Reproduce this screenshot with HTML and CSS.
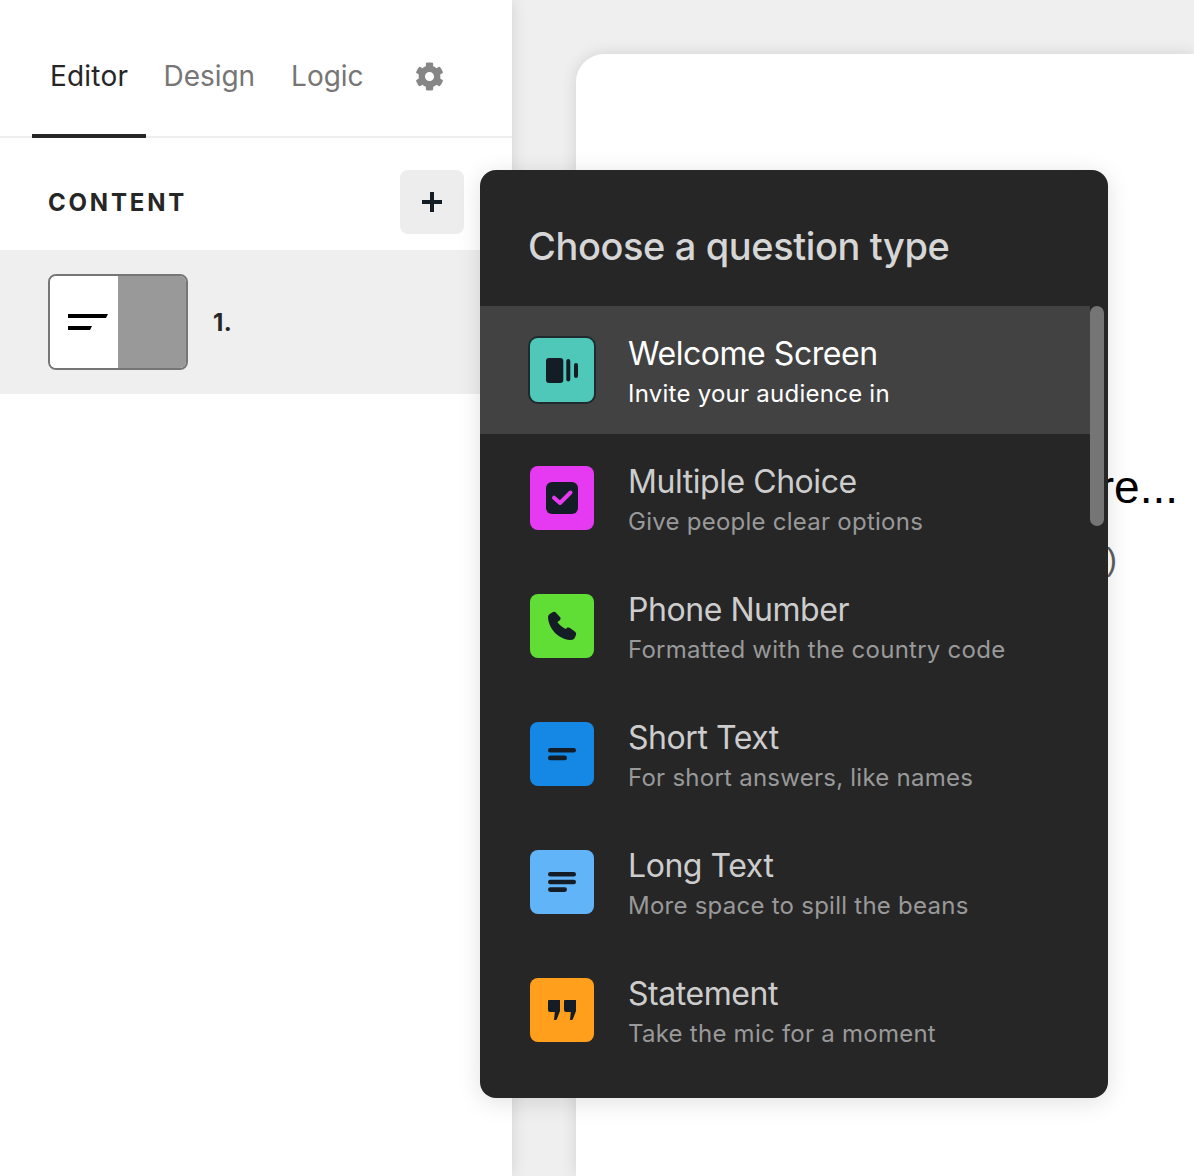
FILE: index.html
```html
<!DOCTYPE html>
<html lang="en">
<head>
<meta charset="utf-8">
<title>Choose a question type</title>
<link rel="stylesheet" href="styles.css">
</head>
<body>
<div class="app">
  <aside class="sidebar">
    <nav class="tabs">
      <a class="tab tab-active">Editor</a>
      <a class="tab tab-shift">Design</a>
      <a class="tab">Logic</a>
      <svg class="gear" viewBox="0 0 512 512"><path d="M487.4 315.7l-42.6-24.6c4.3-23.2 4.3-47 0-70.2l42.6-24.6c4.9-2.8 7.1-8.6 5.5-14-11.1-35.6-30-67.8-54.7-94.6-3.8-4.1-10-5.1-14.8-2.3L380.8 110c-17.9-15.4-38.5-27.3-60.8-35.1V25.8c0-5.6-3.9-10.5-9.4-11.7-36.7-8.2-74.3-7.8-109.2 0-5.5 1.2-9.4 6.1-9.4 11.7V75c-22.2 7.9-42.8 19.8-60.8 35.1L88.7 85.5c-4.9-2.8-11-1.9-14.8 2.3-24.7 26.7-43.6 58.9-54.7 94.6-1.7 5.4.6 11.2 5.5 14L67.3 221c-4.3 23.2-4.3 47 0 70.2l-42.6 24.6c-4.9 2.8-7.1 8.6-5.5 14 11.1 35.6 30 67.8 54.7 94.6 3.8 4.1 10 5.1 14.8 2.3l42.6-24.6c17.9 15.4 38.5 27.3 60.8 35.1v49.2c0 5.6 3.9 10.5 9.4 11.7 36.7 8.2 74.3 7.8 109.2 0 5.5-1.2 9.4-6.1 9.4-11.7v-49.2c22.2-7.9 42.8-19.8 60.8-35.1l42.6 24.6c4.9 2.8 11 1.9 14.8-2.3 24.7-26.7 43.6-58.9 54.7-94.6 1.5-5.5-.7-11.3-5.6-14.1zM256 336c-44.1 0-80-35.9-80-80s35.9-80 80-80 80 35.9 80 80-35.9 80-80 80z"/></svg>
    </nav>
    <div class="content-head">
      <h2 class="content-title">CONTENT</h2>
      <button class="add-btn" type="button" aria-label="Add">
        <svg class="plus" viewBox="0 0 20 20"><path d="M0 10H20M10 0V20"/></svg>
      </button>
    </div>
    <div class="question-row">
      <div class="thumb">
        <div class="thumb-left">
          <svg class="thumb-icon" viewBox="0 0 40 16"><path d="M0 0H40L38 4H0ZM0 12H24L22 16H0Z"/></svg>
        </div>
        <div class="thumb-right"></div>
      </div>
      <span class="question-num">1.</span>
    </div>
  </aside>

  <main class="canvas">
    <section class="card">
      <p class="card-title">Sure...</p>
      <p class="card-sub">(optional)</p>
    </section>
  </main>

  <div class="popup">
    <h3 class="popup-title">Choose a question type</h3>
    <ul class="type-list">
      <li class="type type-active">
        <span class="tile tile-welcome">
          <svg class="tile-icon" viewBox="0 0 64 64"><rect x="16" y="20" width="17.3" height="25" rx="3"/><rect x="36.3" y="21" width="4" height="22.5" rx="2"/><rect x="44" y="25" width="4" height="15" rx="2"/></svg>
        </span>
        <span class="type-text"><span class="type-name">Welcome Screen</span><span class="type-desc">Invite your audience in</span></span>
      </li>
      <li class="type">
        <span class="tile tile-choice">
          <svg class="tile-icon" viewBox="0 0 64 64"><rect x="16" y="16" width="32" height="32" rx="6"/><path class="check" d="M24 31.7L30 37L40.5 26.5"/></svg>
        </span>
        <span class="type-text"><span class="type-name">Multiple Choice</span><span class="type-desc">Give people clear options</span></span>
      </li>
      <li class="type">
        <span class="tile tile-phone">
          <svg class="tile-icon" viewBox="0 0 64 64"><path d="M18 23Q18 20.5 20.5 19.5L23 18Q25 17.4 26.2 19L30.4 23.6Q31.3 25.3 29.6 26.4L27.4 28Q30 32.2 35.8 35L37.4 33.6Q38.8 33 40 34L45.4 38Q46.6 39.4 46 41L44.4 44.4Q43 46 40 46C28 45 18.5 34.5 18 23Z"/></svg>
        </span>
        <span class="type-text"><span class="type-name">Phone Number</span><span class="type-desc">Formatted with the country code</span></span>
      </li>
      <li class="type">
        <span class="tile tile-short">
          <svg class="tile-icon" viewBox="0 0 64 64"><rect x="18" y="26" width="28" height="4.6" rx="2.3"/><rect x="18" y="33.6" width="19" height="4.6" rx="2.3"/></svg>
        </span>
        <span class="type-text"><span class="type-name">Short Text</span><span class="type-desc">For short answers, like names</span></span>
      </li>
      <li class="type">
        <span class="tile tile-long">
          <svg class="tile-icon" viewBox="0 0 64 64"><rect x="18" y="22" width="28" height="4.6" rx="2.3"/><rect x="18" y="29.7" width="28" height="4.6" rx="2.3"/><rect x="18" y="37.3" width="19" height="4.6" rx="2.3"/></svg>
        </span>
        <span class="type-text"><span class="type-name">Long Text</span><span class="type-desc">More space to spill the beans</span></span>
      </li>
      <li class="type">
        <span class="tile tile-statement">
          <svg class="tile-icon" viewBox="0 0 64 64"><path d="M19 22H30V33L26.7 41.5Q25.5 42.3 24 42L24.8 34H20Q18 34 18 32V23Q18 22 19 22ZM35 22H46V33L42.7 41.5Q41.5 42.3 40 42L40.8 34H36Q34 34 34 32V23Q34 22 35 22Z"/></svg>
        </span>
        <span class="type-text"><span class="type-name">Statement</span><span class="type-desc">Take the mic for a moment</span></span>
      </li>
    </ul>
    <div class="scroll-thumb"></div>
  </div>
</div>
</body>
</html>
```

FILE: styles.css
```css
* { box-sizing: border-box; }
html, body { margin: 0; height: 100%; overflow: hidden; }
body { font-family: Inter, "Noto Sans", sans-serif; background: #efefef; color: #262627; }

.app { position: relative; display: flex; width: 1194px; height: 1176px; overflow: hidden; }

/* sidebar */
.sidebar { position: relative; z-index: 1; flex: 0 0 512px; background: #fff; box-shadow: 0 0 16px rgba(0,0,0,.12); }
.tabs { display: flex; align-items: center; height: 138px; padding-left: 32px; border-bottom: 2px solid #eee; }
.tab { display: flex; align-items: center; height: 138px; margin-bottom: -2px; padding: 18px 18px 0; font-size: 28px; line-height: 36px; letter-spacing: -.05px; color: #767676; border-bottom: 4px solid transparent; }
.tab-active { letter-spacing: .2px; color: #262627; border-bottom-color: #262627; }
.tab-shift { margin-left: -.6px; }
.gear { width: 29px; height: 29px; margin: 16px 0 0 34px; fill: #868686; }

.content-head { display: flex; align-items: center; justify-content: space-between; padding: 32px 48px 16px; }
.content-title { margin: 0; padding-top: 2px; font-size: 24px; line-height: 32px; font-weight: 700; letter-spacing: 2.8px; color: #262627; }
.add-btn { display: flex; align-items: center; justify-content: center; width: 64px; height: 64px; padding: 0; border: 0; border-radius: 8px; background: #ededed; }
.plus { width: 20px; height: 20px; fill: none; stroke: #141d26; stroke-width: 4; }

.question-row { display: flex; align-items: center; gap: 25px; height: 144px; padding-left: 48px; background: #efefef; }
.thumb { display: flex; width: 140px; height: 96px; border: 2px solid #767676; border-radius: 8px; overflow: hidden; }
.thumb-left { display: flex; align-items: flex-start; flex: 0 0 50%; padding: 38px 0 0 18px; background: #fff; }
.thumb-right { flex: 0 0 50%; background: #999; }
.thumb-icon { display: block; width: 40px; height: 16px; fill: #000; }
.question-num { padding-top: 2px; font-size: 24px; font-weight: 700; line-height: 32px; letter-spacing: .5px; color: #262627; }

/* canvas */
.canvas { flex: 1; min-width: 0; padding: 54px 0 0 64px; }
.card { display: flex; flex-direction: column; align-items: flex-end; height: 1122px; padding: 406px 16px 0 0; background: #fff; border-radius: 28px 0 0 0; box-shadow: 0 0 16px rgba(0,0,0,.12); }
.card-title { margin: 0; font-family: "Liberation Sans", Arial, sans-serif; font-size: 46px; line-height: 54px; color: #000; white-space: nowrap; }
.card-sub { margin: 25px 61px 0 0; font-family: "Liberation Sans", Arial, sans-serif; font-size: 32px; line-height: 40px; color: #5e5e5e; white-space: nowrap; }

/* popup */
.popup { position: absolute; z-index: 2; left: 480px; top: 170px; width: 628px; height: 928px; overflow: hidden; background: #262627; border-radius: 16px; box-shadow: 0 4px 24px rgba(0,0,0,.12); }
.popup-title { display: flex; align-items: center; height: 136px; margin: 0; padding: 16px 48px 0; font-size: 38px; font-weight: 450; letter-spacing: -.4px; color: #d6d6d6; }
.type-list { width: 610px; margin: 0; padding: 0; list-style: none; }
.type { display: flex; align-items: center; gap: 34px; height: 128px; padding-left: 50px; }
.type-active { background: #424242; }
.type-text { display: flex; flex-direction: column; padding-top: 4px; }
.type-name { font-size: 32px; line-height: 40px; letter-spacing: -.45px; color: #cdcdcd; white-space: nowrap; }
.type-desc { margin-top: 4px; font-size: 24px; line-height: 32px; letter-spacing: .25px; color: #999; white-space: nowrap; }
.type-active .type-name, .type-active .type-desc { color: #fff; }

.tile { flex: 0 0 64px; width: 64px; height: 64px; border-radius: 8px; }
.tile-icon { display: block; width: 64px; height: 64px; fill: #141d26; }
.check { fill: none; stroke: #e53af2; stroke-width: 4; stroke-linecap: round; stroke-linejoin: round; }
.tile-welcome { background: #4fc8ba; box-shadow: 0 0 0 2px #1f2a2e; }
.tile-choice { background: #e53af2; }
.tile-phone { background: #61de36; }
.tile-short { background: #1488e4; }
.tile-long { background: #62b4f8; }
.tile-statement { background: #ff9f1c; }

.scroll-thumb { position: absolute; left: 610px; top: 136px; width: 14px; height: 220px; border-radius: 7px; background: #757575; }
```
